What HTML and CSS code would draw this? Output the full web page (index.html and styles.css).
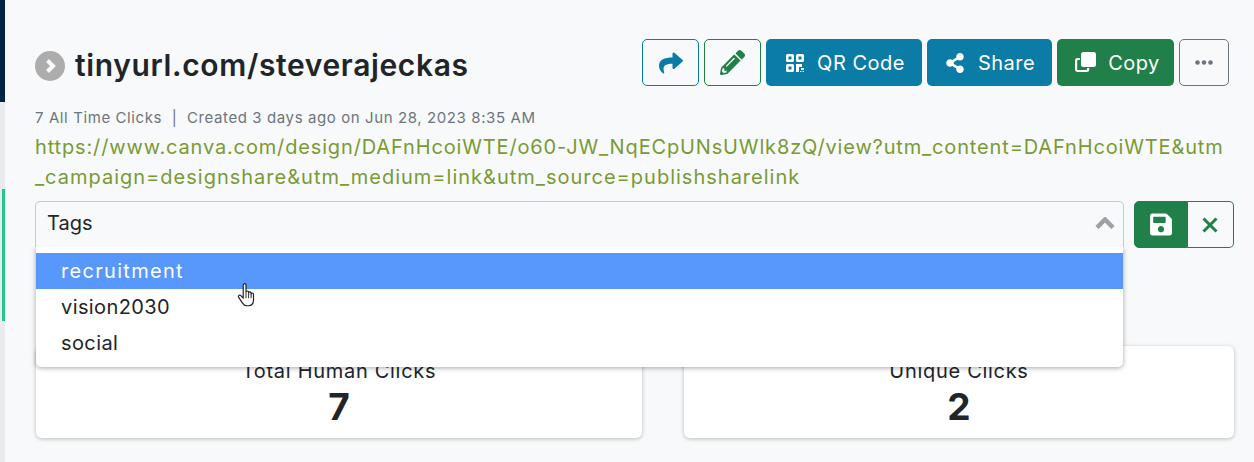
FILE: index.html
```html
<!DOCTYPE html>
<html lang="en">
<head>
    <meta charset="UTF-8">
    <title>tinyurl.com/steverajeckas</title>
    <link rel="stylesheet" href="styles.css">
</head>
<body>
    <div class="rail">
        <div class="rail-nav"></div>
        <div class="rail-active"></div>
    </div>
    <main class="content">
        <div class="header">
            <div class="title">
                <span class="title-toggle">
                    <svg viewBox="0 0 30 30" width="30" height="30"><circle cx="15" cy="15" r="15" fill="#adadad"/><path d="M12.5 9.5 18 15l-5.500 5.500" fill="none" stroke="#f8f9fa" stroke-width="4"/></svg>
                </span>
                <h1>tinyurl.com/steverajeckas</h1>
            </div>
            <div class="actions">
                <button class="btn btn-icon btn-outline-blue">
                    <svg viewBox="0 0 512 512" width="24" height="24"><path fill="#0a7ca5" d="M503.691 189.836L327.687 37.851C312.281 24.546 288 35.347 288 56.015v80.053C127.371 137.907 0 170.1 0 322.326c0 61.441 39.581 122.309 83.333 154.132 13.653 9.931 33.111-2.533 28.077-18.631C66.066 312.814 132.917 274.316 288 272.085V360c0 20.7 24.3 31.453 39.687 18.164l176.004-152c11.071-9.562 11.086-26.753 0-36.328z"/></svg>
                </button>
                <button class="btn btn-icon btn-outline-green">
                    <svg viewBox="0 0 512 512" width="25" height="25"><path fill="#218049" d="M497.9 142.1l-46.1 46.1c-4.7 4.7-12.3 4.7-17 0l-111-111c-4.7-4.7-4.7-12.3 0-17l46.1-46.1c18.7-18.7 49.1-18.7 67.9 0l60.1 60.1c18.8 18.7 18.8 49.1 0 67.9zM284.2 99.8L21.6 362.4.4 483.9c-2.9 16.4 11.4 30.6 27.8 27.8l121.5-21.3 262.6-262.6c4.7-4.7 4.7-12.3 0-17l-111-111c-4.8-4.7-12.4-4.7-17.1 0zM124.1 339.9c-5.5-5.5-5.5-14.3 0-19.8l154-154c5.5-5.5 14.3-5.500 19.8 0s5.500 14.300 0 19.800l-154 154c-5.500 5.500-14.300 5.500-19.800 0zM88 424h48v36.300l-64.500 11.300-31.100-31.100L51.700 376H88v48z"/></svg>
                </button>
                <button class="btn btn-blue btn-qr">
                    <svg viewBox="0 0 18 18" width="18" height="18"><path fill="#fff" fill-rule="evenodd" d="M1.500 0h5A1.500 1.500 0 0 1 8 1.500v5A1.500 1.500 0 0 1 6.500 8h-5A1.500 1.500 0 0 1 0 6.500v-5A1.500 1.500 0 0 1 1.500 0zM2.500 2.500v3h3v-3zM11.500 0h5A1.500 1.500 0 0 1 18 1.500v5A1.500 1.500 0 0 1 16.500 8h-5A1.500 1.500 0 0 1 10 6.500v-5A1.500 1.500 0 0 1 11.500 0zM12.500 2.500v3h3v-3zM1.500 10h5A1.500 1.500 0 0 1 8 11.500v5A1.500 1.500 0 0 1 6.500 18h-5A1.500 1.500 0 0 1 0 16.500v-5A1.500 1.500 0 0 1 1.500 10zM2.500 12.500v3h3v-3zM10 10h6v3h-3v5h-3zM15 14h3v2h-3zM14 17h1.500v1H14zM16.500 17H18v1h-1.500z"/></svg>
                    QR Code
                </button>
                <button class="btn btn-blue btn-share">
                    <svg viewBox="0 0 448 512" width="18" height="20"><path fill="#fff" d="M352 320c-22.608 0-43.387 7.819-59.79 20.895l-102.486-64.054a96.551 96.551 0 0 0 0-41.683l102.486-64.054C308.613 184.181 329.392 192 352 192c53.019 0 96-42.981 96-96S405.019 0 352 0s-96 42.981-96 96c0 7.158.79 14.13 2.276 20.841L155.79 180.895C139.387 167.819 118.608 160 96 160c-53.019 0-96 42.981-96 96s42.981 96 96 96c22.608 0 43.387-7.819 59.79-20.895l102.486 64.054A96.301 96.301 0 0 0 256 416c0 53.019 42.981 96 96 96s96-42.981 96-96-42.981-96-96-96z"/></svg>
                    Share
                </button>
                <button class="btn btn-green btn-copy">
                    <svg viewBox="0 0 21 21" width="21" height="21"><path fill="none" stroke="#fff" stroke-width="2.200" d="M5 7H2.500A1.400 1.400 0 0 0 1.100 8.400v9.200A1.400 1.400 0 0 0 2.500 19h9.200a1.400 1.400 0 0 0 1.400-1.400V16"/><rect x="6" y="0" width="15" height="15" rx="2.500" fill="#fff"/></svg>
                    Copy
                </button>
                <button class="btn btn-icon btn-more">
                    <svg viewBox="0 0 18 5" width="18" height="5"><circle cx="2.500" cy="2.500" r="2.300" fill="#6c757d"/><circle cx="9" cy="2.500" r="2.300" fill="#6c757d"/><circle cx="15.500" cy="2.500" r="2.300" fill="#6c757d"/></svg>
                </button>
            </div>
        </div>

        <p class="meta">7 All Time Clicks &nbsp;|&nbsp; Created 3 days ago on Jun 28, 2023 8:35 AM</p>
        <a class="long-url" href="#">https://www.canva.com/design/DAFnHcoiWTE/o60-JW_NqECpUNsUWlk8zQ/view?utm_content=DAFnHcoiWTE&amp;utm<br><span class="long-url-tail">_campaign=designshare&amp;utm_medium=link&amp;utm_source=publishsharelink</span></a>

        <div class="tag-row">
            <div class="tag-select">
                <div class="tag-control">
                    <span>Tags</span>
                    <svg viewBox="0 0 20 12" width="20" height="12"><path d="M2 10.500 10 2.500l8 8" fill="none" stroke="#a0a0a0" stroke-width="4.500"/></svg>
                </div>
                <ul class="tag-menu">
                    <li class="is-active">recruitment</li>
                    <li>vision2030</li>
                    <li>social</li>
                </ul>
                <svg class="cursor" viewBox="0 0 18 24" width="20" height="26"><path fill="#fff" stroke="#222" stroke-width="1.100" stroke-linejoin="round" d="M5.500 2c0-1.800 2.600-1.800 2.600 0v6.500c0-1.500 2.400-1.500 2.400 0v.8c0-1.400 2.300-1.400 2.300 0v.9c0-1.300 2.200-1.300 2.200.2v5.100c0 3-1.500 5.500-4.800 5.500H8.700c-2 0-3-1-4-2.600L1.300 13.300c-1-1.500.8-2.800 2-1.600l2.200 2.300z"/><path d="M8.100 9v5M10.500 9.500V14M12.800 10.200V14" stroke="#222" stroke-width=".9"/></svg>
            </div>
            <div class="tag-buttons">
                <button class="tag-save">
                    <svg viewBox="0 0 448 512" width="22" height="25"><path fill="#fff" d="M433.941 129.941l-83.882-83.882A48 48 0 0 0 316.118 32H48C21.490 32 0 53.490 0 80v352c0 26.510 21.490 48 48 48h352c26.510 0 48-21.490 48-48V163.882a48 48 0 0 0-14.059-33.941zM224 416c-35.346 0-64-28.654-64-64 0-35.346 28.654-64 64-64s64 28.654 64 64c0 35.346-28.654 64-64 64zm96-304.520V212c0 6.627-5.373 12-12 12H76c-6.627 0-12-5.373-12-12V108c0-6.627 5.373-12 12-12h228.520c3.183 0 6.235 1.264 8.485 3.515l3.480 3.480A11.996 11.996 0 0 1 320 111.480z"/></svg>
                </button>
                <button class="tag-cancel">
                    <svg viewBox="0 0 16 16" width="16" height="16"><path d="M1.500 1.500l13 13M14.500 1.500l-13 13" stroke="#218049" stroke-width="3" fill="none"/></svg>
                </button>
            </div>
        </div>

        <div class="stats">
            <div class="stat-card stat-human">
                <div class="stat-label">Total Human Clicks</div>
                <div class="stat-value">7</div>
            </div>
            <div class="stat-card stat-unique">
                <div class="stat-label">Unique Clicks</div>
                <div class="stat-value">2</div>
            </div>
        </div>
    </main>
</body>
</html>
```
FILE: styles.css
```css
* {
    box-sizing: border-box;
}

html, body {
    height: 100%;
}

body {
    margin: 0;
    display: flex;
    overflow: hidden;
    font-family: Inter, "Noto Sans", sans-serif;
    color: #212529;
    background-color: #f8f9fa;
}

.rail {
    width: 5px;
    flex-shrink: 0;
    background-color: #e9ecef;
}

.rail-nav {
    height: 102px;
    background-color: #012345;
}

.rail-active {
    height: 132px;
    margin-top: 87px;
    margin-left: 2px;
    background-color: #20c98b;
}

.content {
    flex: 1;
    padding: 39px 20px 0 30px;
}

.header {
    display: flex;
    justify-content: space-between;
    align-items: center;
    height: 47px;
    padding-right: 5px;
}

.title {
    display: flex;
    align-items: center;
    gap: 10px;
    padding-top: 5px;
}

.title-toggle {
    display: flex;
    margin-top: 2px;
}

h1 {
    margin: 0;
    font-size: 30px;
    font-weight: 600;
    letter-spacing: 0.64px;
    color: #212529;
}

.actions {
    display: flex;
    gap: 5px;
}

.btn {
    display: flex;
    align-items: center;
    justify-content: center;
    height: 47px;
    padding: 0;
    font-family: inherit;
    font-size: 20px;
    letter-spacing: 0.5px;
    color: #fff;
    border: 1px solid transparent;
    border-radius: 5px;
    cursor: pointer;
}

.btn-icon {
    width: 57px;
    background-color: #f8f9fa;
}

.btn-outline-blue {
    border-color: #0a7ca5;
}

.btn-outline-green {
    border-color: #218049;
}

.btn-more {
    width: 50px;
    border-color: #6c757d;
}

.btn-blue {
    background-color: #0a7ca5;
}

.btn-green {
    background-color: #218049;
}

.btn-qr {
    width: 156px;
    gap: 13px;
    padding-left: 3px;
}

.btn-share {
    width: 125px;
    gap: 14px;
    padding-left: 2px;
}

.btn-copy {
    width: 117px;
    gap: 12px;
    padding-left: 4px;
}

.meta {
    margin: 23px 0 0;
    height: 18px;
    font-size: 15px;
    line-height: 18px;
    letter-spacing: 0.6px;
    color: #6c757d;
}

.long-url {
    display: block;
    margin-top: 5px;
    font-size: 20px;
    line-height: 30px;
    letter-spacing: 0.85px;
    white-space: nowrap;
    color: #7a9a34;
    text-decoration: none;
}

.long-url-tail {
    letter-spacing: 1px;
}

.tag-row {
    display: flex;
    gap: 10px;
    margin-top: 9px;
}

.tag-select {
    position: relative;
    width: 1089px;
}

.tag-control {
    display: flex;
    align-items: center;
    justify-content: space-between;
    height: 46px;
    padding: 0 8px 4px 11px;
    font-size: 20px;
    border: 1px solid #c8c9ca;
    border-bottom: 0;
    border-radius: 5px 5px 0 0;
}

.tag-menu {
    position: absolute;
    z-index: 2;
    top: 46px;
    left: 1px;
    right: 1px;
    margin: 0;
    padding: 6px 0;
    list-style: none;
    font-size: 20px;
    letter-spacing: 0.4px;
    background-color: #fff;
    border-radius: 0 0 5px 5px;
    box-shadow: 0 1px 5px rgba(0, 0, 0, 0.35);
    clip-path: inset(0 -8px -8px -8px);
}

.tag-menu li {
    height: 36px;
    padding-left: 25px;
    line-height: 37px;
}

.tag-menu .is-active {
    letter-spacing: 1.3px;
    color: #fff;
    background-color: #5897fb;
}

.cursor {
    position: absolute;
    z-index: 3;
    top: 82px;
    left: 202px;
}

.tag-buttons {
    display: flex;
    width: 100px;
    height: 47px;
}

.tag-save, .tag-cancel {
    display: flex;
    align-items: center;
    justify-content: center;
    padding: 0;
    cursor: pointer;
}

.tag-save {
    width: 54px;
    background-color: #218049;
    border: 1px solid #218049;
    border-radius: 5px 0 0 5px;
}

.tag-cancel {
    flex: 1;
    padding-right: 2px;
    background-color: #f8f9fa;
    border: 1px solid #218049;
    border-left: 0;
    border-radius: 0 5px 5px 0;
}

.stats {
    display: flex;
    margin-top: 98px;
    padding-left: 1px;
}

.stat-card {
    height: 92px;
    padding-top: 13px;
    text-align: center;
    background-color: #fff;
    border-radius: 6px;
    box-shadow: 0 1px 4px rgba(0, 0, 0, 0.25);
}

.stat-human {
    width: 606px;
}

.stat-unique {
    width: 550px;
    margin-left: 42px;
}

.stat-label {
    font-size: 20px;
    line-height: 24px;
    letter-spacing: 0.7px;
}

.stat-value {
    font-size: 37px;
    font-weight: 650;
    line-height: 48px;
}
```
